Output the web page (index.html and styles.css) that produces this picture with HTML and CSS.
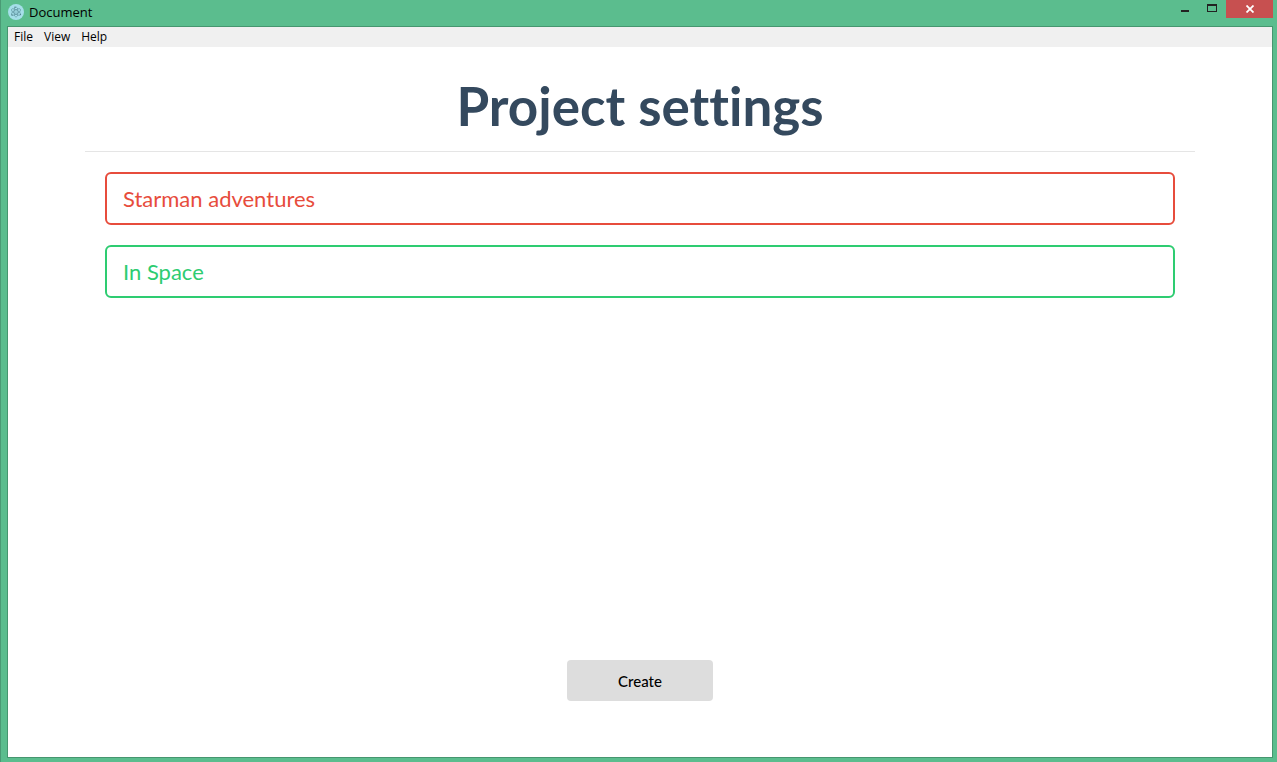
FILE: index.html
```html
<!DOCTYPE html>
<html lang="en">
<head>
<meta charset="utf-8">
<title>Document</title>
<link rel="stylesheet" href="styles.css">
</head>
<body>
<div class="window">
  <header class="titlebar">
    <svg class="app-icon" viewBox="0 0 16 16" aria-hidden="true">
      <circle cx="8" cy="8" r="8" fill="#a5dfe9"/>
      <g fill="none" stroke="#5b909c" stroke-width=".6">
        <ellipse cx="8" cy="8" rx="5.2" ry="2" transform="rotate(30 8 8)"/>
        <ellipse cx="8" cy="8" rx="5.2" ry="2" transform="rotate(90 8 8)"/>
        <ellipse cx="8" cy="8" rx="5.2" ry="2" transform="rotate(150 8 8)"/>
      </g>
      <g fill="#4d7d88"><circle cx="8" cy="8" r=".5"/><circle cx="4" cy="11" r=".7"/><circle cx="12.4" cy="10.6" r=".7"/><circle cx="7" cy="3.2" r=".7"/></g>
    </svg>
    <span class="title">Document</span>
    <div class="controls">
      <button class="control" type="button" aria-label="Minimize"><svg width="10" height="8" viewBox="0 0 10 8"><path d="M1 6h8v2H1z" fill="#222"/></svg></button>
      <button class="control" type="button" aria-label="Maximize"><svg width="10" height="8" viewBox="0 0 10 8" shape-rendering="crispEdges"><path fill-rule="evenodd" d="M0 0h10v8H0zM1 2v5h8V2z" fill="#222"/></svg></button>
      <button class="control close" type="button" aria-label="Close"><svg width="8" height="8" viewBox="0 0 8 8"><path d="M.5.5l7 7M7.5.5l-7 7" stroke="#fff" stroke-width="1.8"/></svg></button>
    </div>
  </header>
  <div class="frame">
    <nav class="menubar">
      <button class="menu" type="button">File</button>
      <button class="menu" type="button">View</button>
      <button class="menu" type="button">Help</button>
    </nav>
    <main class="container">
      <h1 class="heading">Project settings</h1>
      <form class="form">
        <input class="field field-error" type="text" aria-label="Project name" value="Starman adventures">
        <input class="field field-success" type="text" aria-label="Project description" value="In Space">
        <button class="create" type="button">Create</button>
      </form>
    </main>
  </div>
</div>
</body>
</html>
```
FILE: styles.css
```css
* {
  box-sizing: border-box;
}

body {
  margin: 0;
  font-family: Lato, sans-serif;
}

button {
  border: 0;
  background: none;
  padding: 0;
}

.window {
  display: flex;
  flex-direction: column;
  min-height: 100vh;
  padding: 0 4px 4px 6px;
  border-left: 1px solid #4a9a75;
  background: #5bbd8e;
}

.titlebar {
  display: flex;
  align-items: center;
  height: 26px;
  gap: 5px;
  padding-left: 1px;
}

.app-icon {
  width: 16px;
  height: 16px;
  margin-bottom: 2px;
}

.title {
  font: 13px/22px "Open Sans", sans-serif;
  padding-bottom: 2px;
  color: #000;
}

.controls {
  display: flex;
  align-self: flex-start;
  margin-left: auto;
}

.control {
  display: flex;
  align-items: center;
  justify-content: center;
  width: 27px;
  height: 16px;
}

.control:nth-child(2) {
  margin-right: 1px;
}

.close {
  width: 47px;
  height: 18px;
  background: #c75050;
}

.frame {
  display: flex;
  flex: 1;
  flex-direction: column;
  border: 1px solid #46966f;
  background: #fff;
}

.menubar {
  display: flex;
  gap: 11px;
  height: 20px;
  padding-left: 6px;
  background: #f0f0f0;
}

.menu {
  font: 12px/20px "Open Sans", sans-serif;
  color: #000;
}

.container {
  display: flex;
  flex: 1;
  flex-direction: column;
  width: 100%;
  max-width: 1110px;
  margin: 0 auto;
}

.heading {
  margin: 0;
  padding: 29px 0 15px;
  border-bottom: 1px solid #e5e5e5;
  color: #34495e;
  font-size: 53px;
  font-weight: 700;
  font-variant-ligatures: none;
  line-height: 60px;
  text-align: center;
}

.form {
  display: flex;
  flex: 1;
  flex-direction: column;
  gap: 20px;
  padding: 20px 20px 56px;
}

.field {
  width: 100%;
  height: 53px;
  padding: 0 16px;
  border: 2px solid;
  border-radius: 6px;
  background: #fff;
  font: 22px/32px Lato, sans-serif;
}

.field-error {
  border-color: #e74c3c;
  color: #e74c3c;
}

.field-success {
  border-color: #2ecc71;
  color: #2ecc71;
}

.create {
  align-self: center;
  width: 146px;
  height: 41px;
  margin-top: auto;
  border-radius: 4px;
  background: #ddd;
  color: #000;
  font: 500 15px/20px Lato, sans-serif;
}
```
